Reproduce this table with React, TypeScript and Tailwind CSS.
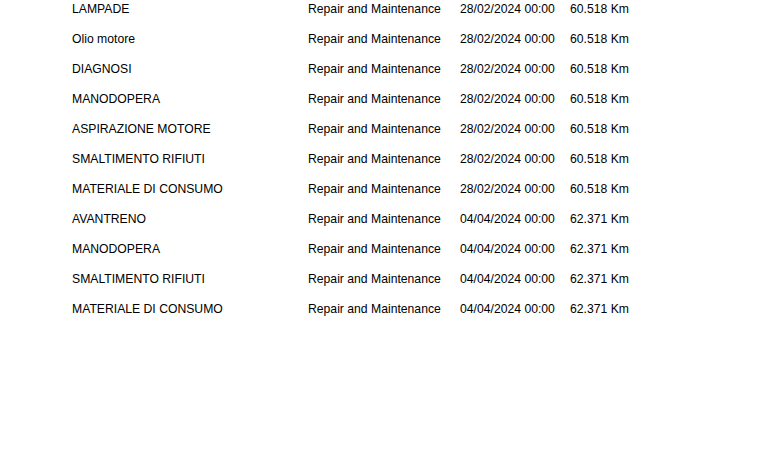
import React from "react";

const rows: [string, string, string, string][] = [
  ["LAMPADE", "Repair and Maintenance", "28/02/2024 00:00", "60.518 Km"],
  ["Olio motore", "Repair and Maintenance", "28/02/2024 00:00", "60.518 Km"],
  ["DIAGNOSI", "Repair and Maintenance", "28/02/2024 00:00", "60.518 Km"],
  ["MANODOPERA", "Repair and Maintenance", "28/02/2024 00:00", "60.518 Km"],
  ["ASPIRAZIONE MOTORE", "Repair and Maintenance", "28/02/2024 00:00", "60.518 Km"],
  ["SMALTIMENTO RIFIUTI", "Repair and Maintenance", "28/02/2024 00:00", "60.518 Km"],
  ["MATERIALE DI CONSUMO", "Repair and Maintenance", "28/02/2024 00:00", "60.518 Km"],
  ["AVANTRENO", "Repair and Maintenance", "04/04/2024 00:00", "62.371 Km"],
  ["MANODOPERA", "Repair and Maintenance", "04/04/2024 00:00", "62.371 Km"],
  ["SMALTIMENTO RIFIUTI", "Repair and Maintenance", "04/04/2024 00:00", "62.371 Km"],
  ["MATERIALE DI CONSUMO", "Repair and Maintenance", "04/04/2024 00:00", "62.371 Km"],
];

export default function App() {
  return (
    <div
      className="w-[762px] h-[456px] bg-white text-black text-[12.2px] leading-4 pl-[72px] pt-px overflow-hidden"
      style={{ fontFamily: '"Liberation Sans", Arial, sans-serif' }}
    >
      <div className="grid grid-cols-[236px_152px_110px_120px] auto-rows-[30px]">
        {rows.map((r, i) => (
          <React.Fragment key={i}>
            <div className="whitespace-nowrap">{r[0]}</div>
            <div className="whitespace-nowrap">{r[1]}</div>
            <div className="whitespace-nowrap">{r[2]}</div>
            <div className="whitespace-nowrap">{r[3]}</div>
          </React.Fragment>
        ))}
      </div>
    </div>
  );
}
